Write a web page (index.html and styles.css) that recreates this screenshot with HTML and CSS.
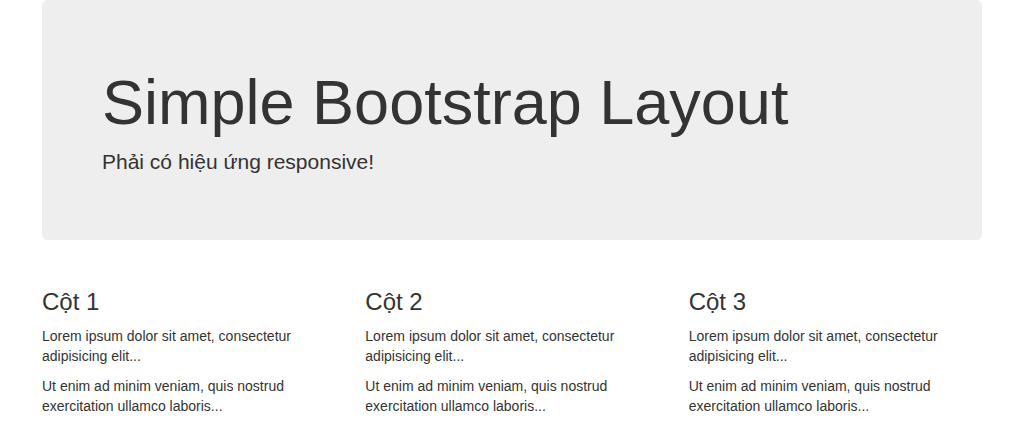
FILE: index.html
```html
<!DOCTYPE html>
<html lang="vi">
<head>
<meta charset="utf-8">
<title>Simple Bootstrap Layout</title>
<link rel="stylesheet" href="styles.css">
</head>
<body>
<div class="container">
  <div class="jumbotron">
    <h1>Simple Bootstrap Layout</h1>
    <p>Phải có hiệu ứng responsive!</p>
  </div>
  <div class="row">
    <div class="col">
      <h3>Cột 1</h3>
      <p>Lorem ipsum dolor sit amet, consectetur adipisicing elit...</p>
      <p>Ut enim ad minim veniam, quis nostrud exercitation ullamco laboris...</p>
    </div>
    <div class="col">
      <h3>Cột 2</h3>
      <p>Lorem ipsum dolor sit amet, consectetur adipisicing elit...</p>
      <p>Ut enim ad minim veniam, quis nostrud exercitation ullamco laboris...</p>
    </div>
    <div class="col">
      <h3>Cột 3</h3>
      <p>Lorem ipsum dolor sit amet, consectetur adipisicing elit...</p>
      <p>Ut enim ad minim veniam, quis nostrud exercitation ullamco laboris...</p>
    </div>
  </div>
</div>
</body>
</html>
```
FILE: styles.css
```css
* { box-sizing: border-box; }
html, body { margin: 0; padding: 0; }
body {
  font-family: "Liberation Sans", Arial, Helvetica, sans-serif;
  font-size: 14px;
  line-height: 1.42857143;
  color: #333;
  background: #fff;
}
.container {
  width: 970px;
  margin: 0 auto;
  padding: 0 15px;
}
.jumbotron {
  background: #eee;
  border-radius: 6px;
  padding: 48px 60px;
  margin-bottom: 30px;
}
.jumbotron h1 {
  font-size: 63px;
  font-weight: 500;
  line-height: 1.1;
  margin: 20px 0 10px;
}
.jumbotron p {
  font-size: 21px;
  font-weight: 200;
  margin: 0 0 15px;
}
.row {
  display: flex;
  margin: 0 -15px;
}
.col {
  width: 33.33333%;
  padding: 0 15px;
}
.col h3 {
  font-size: 24px;
  font-weight: 500;
  line-height: 1.1;
  margin: 19px 0 10px;
}
.col p {
  margin: 0 0 10px;
}
```
